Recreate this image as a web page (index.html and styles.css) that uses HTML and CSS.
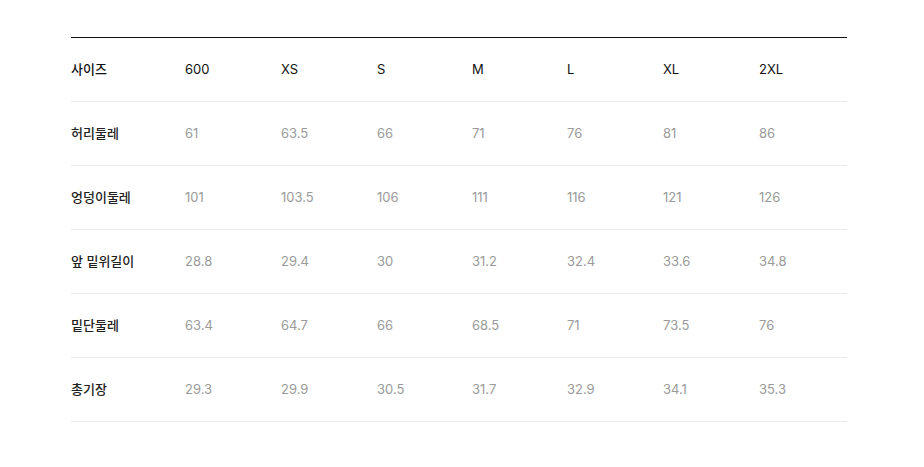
FILE: index.html
```html
<!DOCTYPE html>
<html lang="ko">
<head>
<meta charset="utf-8">
<link rel="stylesheet" href="styles.css">
</head>
<body>
<div class="size-table">
  <div class="row head">
    <div class="label">사이즈</div><div>600</div><div>XS</div><div>S</div><div>M</div><div>L</div><div>XL</div><div>2XL</div>
  </div>
  <div class="row">
    <div class="label">허리둘레</div><div>61</div><div>63.5</div><div>66</div><div>71</div><div>76</div><div>81</div><div>86</div>
  </div>
  <div class="row">
    <div class="label">엉덩이둘레</div><div>101</div><div>103.5</div><div>106</div><div>111</div><div>116</div><div>121</div><div>126</div>
  </div>
  <div class="row">
    <div class="label">앞 밑위길이</div><div>28.8</div><div>29.4</div><div>30</div><div>31.2</div><div>32.4</div><div>33.6</div><div>34.8</div>
  </div>
  <div class="row">
    <div class="label">밑단둘레</div><div>63.4</div><div>64.7</div><div>66</div><div>68.5</div><div>71</div><div>73.5</div><div>76</div>
  </div>
  <div class="row">
    <div class="label">총기장</div><div>29.3</div><div>29.9</div><div>30.5</div><div>31.7</div><div>32.9</div><div>34.1</div><div>35.3</div>
  </div>
</div>
</body>
</html>
```
FILE: styles.css
```css
html, body {
  margin: 0;
  padding: 0;
  background: #fff;
}
body {
  font-family: Inter, "Noto Sans CJK KR", sans-serif;
  font-size: 13px;
  color: #9a9a9a;
}
.size-table {
  width: 776px;
  margin: 37px 0 0 71px;
  border-top: 1px solid #111;
}
.row {
  display: grid;
  grid-template-columns: 114px 96px 96px 95px 95px 96px 96px 88px;
  height: 63px;
  padding-bottom: 0;
  align-items: center;
  border-bottom: 1px solid #ebebeb;
  box-sizing: content-box;
}
.row > div {
  margin-top: -2px;
}
.row .label {
  color: #222;
  font-weight: 500;
}
.row.head div {
  color: #111;
  font-weight: 400;
}
.row.head .label {
  font-weight: 500;
}
```
